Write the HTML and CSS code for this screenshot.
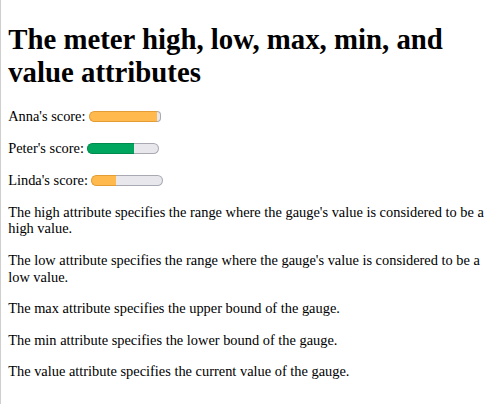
FILE: index.html
```html
<!DOCTYPE html>
<html>
<head>
<meta charset="utf-8">
<link rel="stylesheet" href="styles.css">
</head>
<body>
<h1 class="title">The meter high, low, max, min, and value attributes</h1>

<div class="scores">
  <div class="score">
    <label class="label">Anna's score:</label>
    <span class="meter" role="meter" aria-valuenow="95" aria-valuemin="0" aria-valuemax="100"><span class="fill warn" style="width:95%"></span><span class="rest"></span></span>
  </div>
  <div class="score">
    <label class="label">Peter's score:</label>
    <span class="meter" role="meter" aria-valuenow="65" aria-valuemin="0" aria-valuemax="100"><span class="fill good" style="width:65%"></span><span class="rest"></span></span>
  </div>
  <div class="score">
    <label class="label">Linda's score:</label>
    <span class="meter" role="meter" aria-valuenow="35" aria-valuemin="0" aria-valuemax="100"><span class="fill warn" style="width:35%"></span><span class="rest"></span></span>
  </div>
</div>

<p class="text">The high attribute specifies the range where the gauge's value is considered to be a high value.</p>
<p class="text">The low attribute specifies the range where the gauge's value is considered to be a low value.</p>
<p class="text">The max attribute specifies the upper bound of the gauge.</p>
<p class="text">The min attribute specifies the lower bound of the gauge.</p>
<p class="text">The value attribute specifies the current value of the gauge.</p>
</body>
</html>
```
FILE: styles.css
```css
html {
  border-left: 1px solid #cfcfcf;
  min-height: 100%;
  box-sizing: border-box;
}
body {
  margin: 7.2px;
  font-family: "Liberation Serif", "Times New Roman", serif;
  font-size: 14.4px;
  color: #000;
  background: #fff;
}
.title {
  font-size: 28.8px;
  font-weight: bold;
  margin: 16.3px 0 19.3px;
}
.scores {
  display: flex;
  flex-direction: column;
  gap: 16px;
}
.score {
  height: 16px;
  display: flex;
  align-items: center;
  gap: 3px;
}
.meter {
  display: inline-flex;
  width: 72px;
  height: 11px;
}
.fill {
  height: 100%;
  box-sizing: border-box;
  border: 1px solid;
  border-right: none;
  border-radius: 6px 0 0 6px;
}
.fill.warn {
  background: #ffb94c;
  border-color: #e39d34;
}
.fill.good {
  background: #00a65d;
  border-color: #008a4b;
}
.rest {
  flex: 1;
  height: 100%;
  box-sizing: border-box;
  background: #e7e7ec;
  border: 1px solid #a9a9b3;
  border-left: none;
  border-radius: 0 6px 6px 0;
}
.text {
  margin: 15px 0;
  line-height: 16.6px;
}
```
